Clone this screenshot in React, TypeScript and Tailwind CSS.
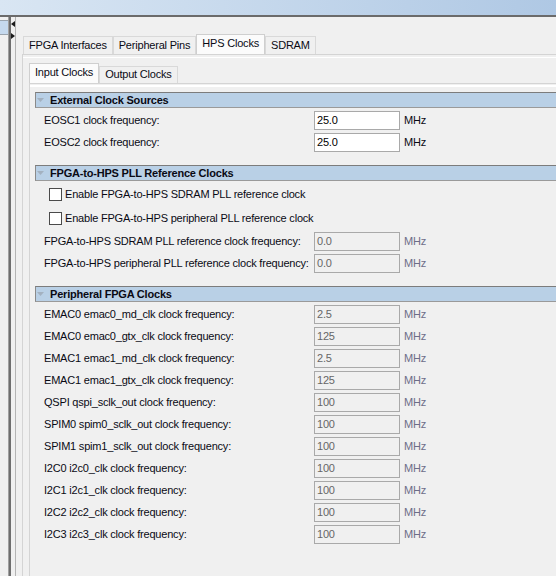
import type { ReactNode } from 'react';
import clsx from 'clsx';

type Row = { label: string; value: string; enabled?: boolean };

const externalRows: Row[] = [
  { label: 'EOSC1 clock frequency:', value: '25.0', enabled: true },
  { label: 'EOSC2 clock frequency:', value: '25.0', enabled: true },
];

const pllRows: Row[] = [
  { label: 'FPGA-to-HPS SDRAM PLL reference clock frequency:', value: '0.0' },
  { label: 'FPGA-to-HPS peripheral PLL reference clock frequency:', value: '0.0' },
];

const peripheralRows: Row[] = [
  { label: 'EMAC0 emac0_md_clk clock frequency:', value: '2.5' },
  { label: 'EMAC0 emac0_gtx_clk clock frequency:', value: '125' },
  { label: 'EMAC1 emac1_md_clk clock frequency:', value: '2.5' },
  { label: 'EMAC1 emac1_gtx_clk clock frequency:', value: '125' },
  { label: 'QSPI qspi_sclk_out clock frequency:', value: '100' },
  { label: 'SPIM0 spim0_sclk_out clock frequency:', value: '100' },
  { label: 'SPIM1 spim1_sclk_out clock frequency:', value: '100' },
  { label: 'I2C0 i2c0_clk clock frequency:', value: '100' },
  { label: 'I2C1 i2c1_clk clock frequency:', value: '100' },
  { label: 'I2C2 i2c2_clk clock frequency:', value: '100' },
  { label: 'I2C3 i2c3_clk clock frequency:', value: '100' },
];

function SectionHeader({ title, className }: { title: string; className?: string }) {
  return (
    <div
      className={clsx(
        'flex h-[16px] items-center border border-r-0 border-t-[#7c7c7c] border-b-[#9a9a9a] border-l-[#8a8a8a] bg-[#b9d0e6] pl-[1px]',
        className,
      )}
    >
      <svg width="7" height="4" viewBox="0 0 7 4" className="mr-[6px]">
        <polygon points="0,0 7,0 3.5,4" fill="#a3b1c0" />
      </svg>
      <span className="text-[11px] font-bold leading-none text-[#0a0a14]">{title}</span>
    </div>
  );
}

function FreqRow({ label, value, enabled }: Row) {
  return (
    <div className="flex h-[22px] items-center pl-[9px]">
      <div className="w-[270px] whitespace-nowrap text-[#0a0a14]">{label}</div>
      <div
        className={clsx(
          'flex h-[19px] w-[86px] items-center border border-[#a9a9a9] pl-[2px]',
          enabled ? 'bg-white text-[#000]' : 'bg-[#f0f0f0] text-[#666]',
        )}
      >
        {value}
      </div>
      <span className={clsx('ml-[4px]', enabled ? 'text-[#0a0a14]' : 'text-[#6e6e88]')}>MHz</span>
    </div>
  );
}

function CheckRow({ children }: { children: ReactNode }) {
  return (
    <div className="flex h-[24px] items-center pl-[14px]">
      <span className="h-[13px] w-[13px] border border-[#4a4a4a] bg-white" />
      <span className="ml-[3px] whitespace-nowrap text-[#0a0a14]">{children}</span>
    </div>
  );
}

function Tab({ label, selected, small }: { label: string; selected?: boolean; small?: boolean }) {
  return (
    <div
      className={clsx(
        'flex items-start border border-b-0 px-[5px] whitespace-nowrap text-[#0a0a14]',
        selected
          ? 'h-[20px] border-[#cfcfcf] bg-[#fbfbfb] pt-[2px]'
          : clsx('border-[#d9d9d9] bg-[#f0f0f0]', small ? 'h-[17px] pt-[1px]' : 'h-[18px] pt-[2px]'),
      )}
    >
      {label}
    </div>
  );
}

export default function App() {
  return (
    <div className="flex h-[576px] w-[556px] flex-col overflow-hidden bg-[#f0f0f0] font-['Liberation_Sans',Arial,sans-serif] text-[11px] leading-[13px] tracking-[-0.2px]">
      {/* title strip */}
      <div className="h-[17px] shrink-0 border-b-2 border-[#6b6b6b] bg-[#c9dcef] bg-linear-to-r from-[#d9e6f3] to-[#afc8e4]" />

      <div className="flex min-h-0 flex-1">
        {/* left list, cropped */}
        <div className="w-[9px] shrink-0 border-r border-[#a0a0a0] pt-[3px]">
          <div className="h-[15px] border-y border-[#9aa4ae] bg-[#c5d9ee]" />
        </div>

        {/* splitter */}
        <div className="flex w-[7px] shrink-0 flex-col items-center border-l-2 border-r border-l-[#6e6e6e] border-r-[#b4b4b4] pt-[4px]">
          <svg width="4" height="6" viewBox="0 0 4 6">
            <polygon points="4,0 0,3 4,6" fill="#1a1a1a" />
          </svg>
          <svg width="4" height="6" viewBox="0 0 4 6" className="mt-[6px]">
            <polygon points="0,0 4,3 0,6" fill="#1a1a1a" />
          </svg>
        </div>

        {/* main area */}
        <div className="flex min-w-0 flex-1 flex-col pl-[6px] pt-[17px]">
          <div className="ml-[1px] flex items-end">
            <Tab label="FPGA Interfaces" />
            <Tab label="Peripheral Pins" />
            <Tab label="HPS Clocks" selected />
            <Tab label="SDRAM" />
          </div>

          <div className="flex-1 border-l border-t border-[#d4d4d4] pt-[2px]">
            <div className="h-full border-t border-white pl-[6px] pt-[5px]">
              <div className="flex items-end">
                <Tab label="Input Clocks" selected />
                <Tab label="Output Clocks" small />
              </div>

              <div className="h-full border-l border-t border-[#d4d4d4] pt-[1px]">
                <div className="h-full border-t-2 border-white pl-[5px] pt-[5px]">
                  <SectionHeader title="External Clock Sources" className="mb-[1px]" />
                  {externalRows.map((r) => (
                    <FreqRow key={r.label} {...r} />
                  ))}

                  <SectionHeader title="FPGA-to-HPS PLL Reference Clocks" className="mb-[1px] mt-[12px]" />
                  <CheckRow>Enable FPGA-to-HPS SDRAM PLL reference clock</CheckRow>
                  <CheckRow>Enable FPGA-to-HPS peripheral PLL reference clock</CheckRow>
                  {pllRows.map((r) => (
                    <FreqRow key={r.label} {...r} />
                  ))}

                  <SectionHeader title="Peripheral FPGA Clocks" className="mb-[1px] mt-[12px]" />
                  {peripheralRows.map((r) => (
                    <FreqRow key={r.label} {...r} />
                  ))}
                </div>
              </div>
            </div>
          </div>
        </div>
      </div>
    </div>
  );
}
